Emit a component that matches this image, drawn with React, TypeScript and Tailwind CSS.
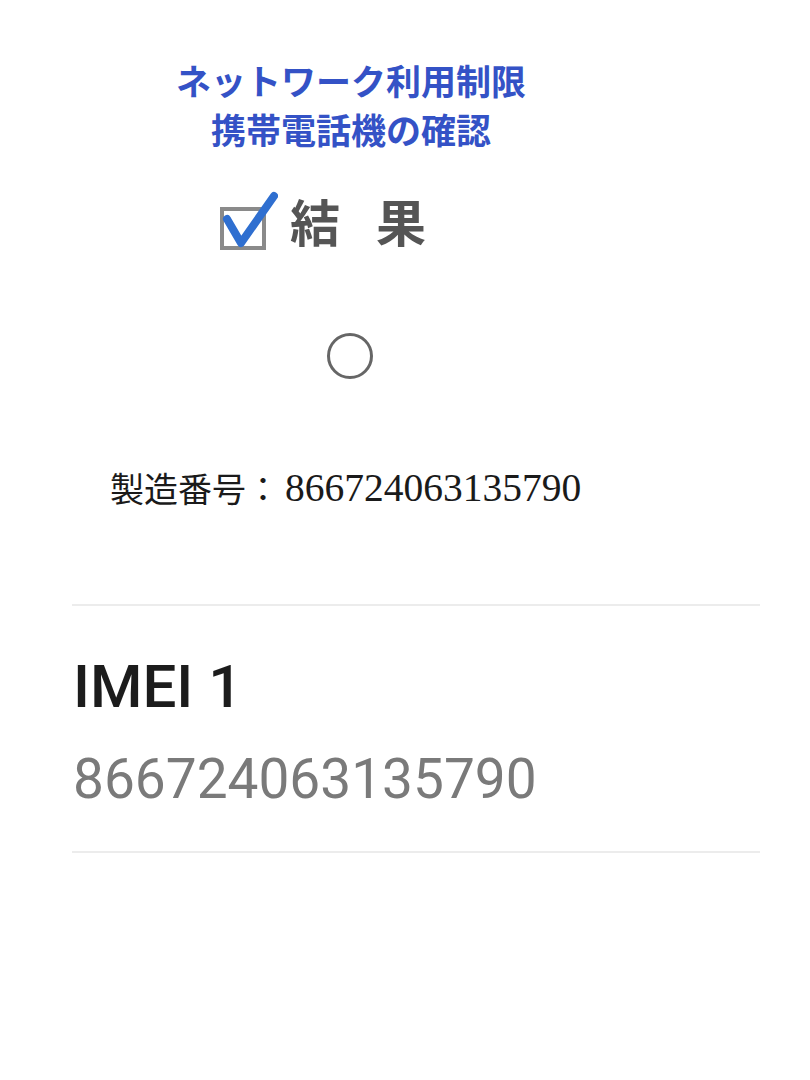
import React from "react";

const cjk = { fontFamily: '"Noto Sans CJK JP", "Noto Sans", sans-serif' };

export default function App() {
  return (
    <div className="w-[810px] h-[1080px] bg-white overflow-hidden">
      <div
        className="w-[702px] pt-[55px] text-center text-[35px] font-bold leading-[49px] text-[#3452c6]"
        style={cjk}
      >
        <div>ネットワーク利用制限</div>
        <div>携帯電話機の確認</div>
      </div>

      <div className="mt-[37px] h-[60px] pl-[218px] flex items-center" style={cjk}>
        <svg width="60" height="62" viewBox="0 0 60 62" className="mt-[2px]">
          <rect x="4" y="19" width="42" height="39" fill="none" stroke="#8a8a8a" strokeWidth="4" />
          <path
            d="M9 29 L23 53 L56 6"
            fill="none"
            stroke="#2f6fd0"
            strokeWidth="8"
            strokeLinecap="round"
            strokeLinejoin="round"
          />
        </svg>
        <span className="ml-[12px] text-[50px] font-bold leading-[60px] text-[#555555]">結</span>
        <span className="ml-[36px] text-[50px] font-bold leading-[60px] text-[#555555]">果</span>
      </div>

      <div className="mt-[83px] ml-[327px] w-[46px] h-[46px] rounded-full border-[3px] border-[#666666]" />

      <div className="mt-[89px] pl-[110px] flex items-center h-[40px] text-[#1a1a1a]">
        <span className="text-[34px] leading-[40px]" style={cjk}>製造番号：</span>
        <span
          className="text-[39.5px] leading-[40px] ml-[5px]"
          style={{ fontFamily: '"Liberation Serif", serif' }}
        >
          866724063135790
        </span>
      </div>

      <div className="mt-[96px] ml-[72px] w-[688px] h-[2px] bg-[#ececec]" />

      <div style={{ fontFamily: 'Roboto, "Noto Sans", sans-serif' }} className="pl-[73px]">
        <div className="mt-[46px] text-[60px] font-medium leading-[70px] text-[#1c1c1c]">IMEI 1</div>
        <div className="mt-[27px] text-[55px] leading-[60px] text-[#7a7a7a]">866724063135790</div>
      </div>

      <div className="mt-[42px] ml-[72px] w-[688px] h-[2px] bg-[#ececec]" />
    </div>
  );
}
